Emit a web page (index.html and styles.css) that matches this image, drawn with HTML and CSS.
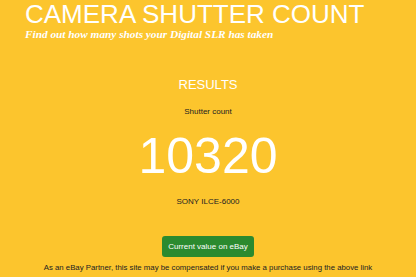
FILE: index.html
```html
<!DOCTYPE html>
<html>
<head>
    <link rel="stylesheet" href="styles.css">
</head>
<body>
    <div class="header">
        <h1 class="title">CAMERA SHUTTER COUNT</h1>
        <p class="tagline">Find out how many shots your Digital SLR has taken</p>
    </div>
    <div class="results">
        <h2 class="results-title">RESULTS</h2>
        <p class="label">Shutter count</p>
        <div class="count">10320</div>
        <p class="model">SONY ILCE-6000</p>
        <a class="ebay-button" href="#">Current value on eBay</a>
        <p class="disclaimer">As an eBay Partner, this site may be compensated if you make a purchase using the above link</p>
    </div>
</body>
</html>
```

FILE: styles.css
```css
body {
    margin: 0;
    background-color: #fcc52d;
    font-family: "Liberation Sans", Arial, sans-serif;
    color: #222;
}

.header {
    padding: 0 25px;
}

.title {
    margin: 0;
    font-size: 26px;
    font-weight: normal;
    color: white;
    line-height: 28px;
}

.tagline {
    margin: 0;
    font-family: "Liberation Serif", Georgia, serif;
    font-style: italic;
    font-weight: bold;
    font-size: 11.3px;
    line-height: 13px;
    color: white;
}

.results {
    display: flex;
    flex-direction: column;
    align-items: center;
    text-align: center;
    padding-top: 36px;
}

.results-title {
    margin: 0;
    font-size: 13px;
    line-height: 15px;
    font-weight: normal;
    color: white;
}

.label {
    margin: 15px 0 0;
    font-size: 8px;
    line-height: 9px;
}

.count {
    margin-top: 15px;
    font-size: 50px;
    line-height: 50px;
    color: white;
}

.model {
    margin: 16px 0 0;
    font-size: 8px;
    line-height: 9px;
}

.ebay-button {
    margin-top: 30px;
    background-color: #2b8a2f;
    color: white;
    text-decoration: none;
    font-size: 8px;
    line-height: 9px;
    padding: 6px 6px;
    border-radius: 3px;
}

.disclaimer {
    margin: 6px 0 0;
    font-size: 7.8px;
    line-height: 9px;
}
```
